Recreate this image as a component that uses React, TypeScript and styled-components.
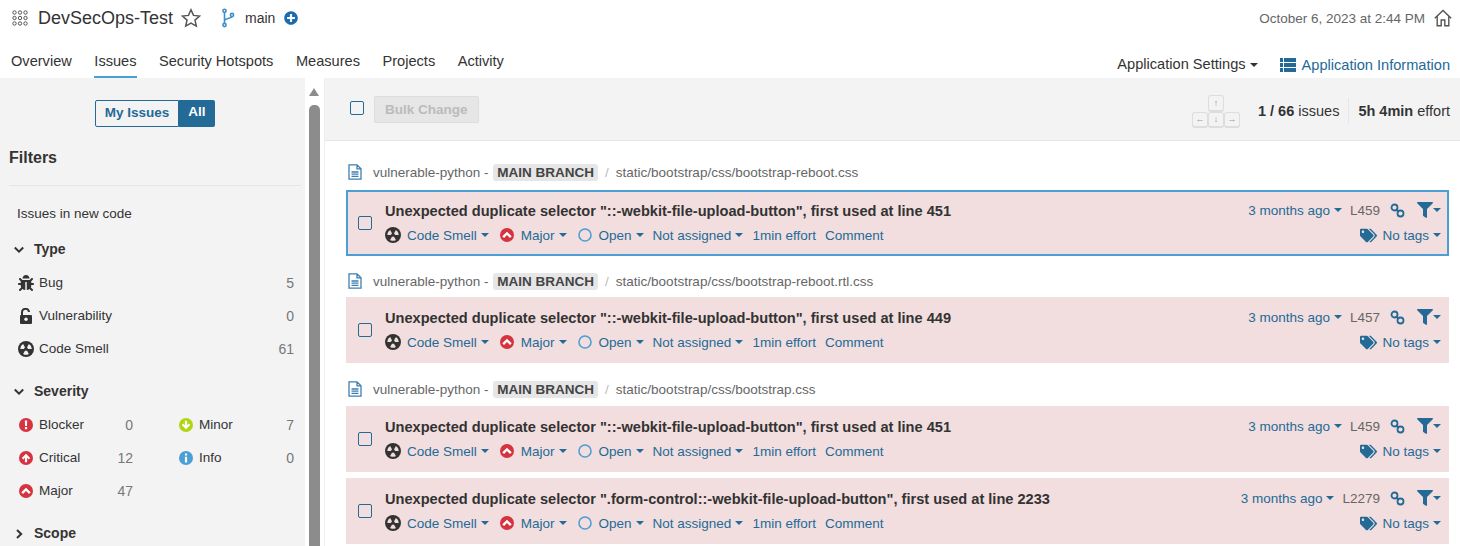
import React from "react";
import styled, { createGlobalStyle } from "styled-components";
import { FaBug, FaFilter, FaTags, FaPlusCircle } from "react-icons/fa";

const GlobalStyle = createGlobalStyle`
  * { box-sizing: border-box; }
  html, body { margin: 0; padding: 0; height: 100%; overflow: hidden; background: #fff; }
  body { font-family: "Liberation Sans", Arial, sans-serif; font-size: 13.5px; color: #333; }
`;

// ---- icons ----
const GridIcon = () => (
  <svg width="16" height="16" viewBox="0 0 16 16" fill="none" stroke="#555" strokeWidth="1">
    {[2.5, 8, 13.5].map((y) => [2.5, 8, 13.5].map((x) => <circle key={`${x}-${y}`} cx={x} cy={y} r="1.7" />))}
  </svg>
);

const StarIcon = () => (
  <svg width="20" height="20" viewBox="0 0 20 20" fill="none" stroke="#555" strokeWidth="1.5">
    <path d="M10 1.8l2.5 5.6 6.1.6-4.6 4.1 1.3 6-5.3-3.1-5.3 3.1 1.3-6L1.4 8l6.1-.6z" />
  </svg>
);

const BranchIcon = () => (
  <svg width="14" height="20" viewBox="0 0 14 20" fill="none" stroke="#3f8fc9" strokeWidth="1.6">
    <circle cx="3.5" cy="2.8" r="1.6" />
    <circle cx="3.5" cy="17" r="1.6" />
    <circle cx="11" cy="7" r="1.6" />
    <path d="M3.500 4.500v10.800M3.500 13c0-3 7-2.500 7.500-4.400" />
  </svg>
);

const HomeIcon = () => (
  <svg width="18" height="18" viewBox="0 0 18 18" fill="none" stroke="#555" strokeWidth="1.4">
    <path d="M.8 9.200L9 1.400l8.200 7.800M3.200 7.400v9.400h4V11h3.600v5.800h4V7.400" />
  </svg>
);

const ListIcon = () => (
  <svg width="16" height="14" viewBox="0 0 16 14" fill="#236a97">
    {[0, 5, 10].map((y) => (
      <g key={y}>
        <rect x="0" y={y} width="3" height="4" />
        <rect x="4" y={y} width="12" height="4" />
      </g>
    ))}
  </svg>
);

const wedge = (deg: number) => {
  const pt = (r: number, a: number) => {
    const rad = (a * Math.PI) / 180;
    return `${(8 + r * Math.cos(rad)).toFixed(2)} ${(8 + r * Math.sin(rad)).toFixed(2)}`;
  };
  return `M${pt(2.1, deg - 30)}L${pt(5.8, deg - 30)}A5.8 5.800 0 0 1 ${pt(5.8, deg + 30)}L${pt(2.1, deg + 30)}Z`;
};

const SmellIcon = ({ light = "#f3f3f3" }: { light?: string }) => (
  <svg width="16" height="16" viewBox="0 0 16 16">
    <circle cx="8" cy="8" r="8" fill="#333" />
    {[-150, -30, 90].map((a) => <path key={a} d={wedge(a)} fill={light} />)}
  </svg>
);

const LockIcon = () => (
  <svg width="14" height="16" viewBox="0 0 14 16">
    <path d="M3 7V4.500a3.500 3.500 0 0 1 7-.5" fill="none" stroke="#333" strokeWidth="2" />
    <rect x="1" y="7" width="12" height="9" rx="1" fill="#333" />
    <circle cx="7" cy="11.300" r="1.700" fill="#f3f3f3" />
  </svg>
);

const SeverityIcon = ({ kind }: { kind: string }) => {
  const fill = kind === "minor" ? "#b0d513" : kind === "info" ? "#4b9fd5" : "#d4333f";
  return (
    <svg width="14" height="14" viewBox="0 0 14 14">
      <circle cx="7" cy="7" r="7" fill={fill} />
      {kind === "blocker" && <path d="M5.800 2.500h2.400l-.3 5.500H6.100zM5.900 9h2.200v2.300H5.900z" fill="#fff" />}
      {kind === "critical" && <path d="M7 2.700L11.200 7 9.700 8.400 8.100 6.800V11.300H5.900V6.800L4.300 8.400 2.800 7z" fill="#fff" />}
      {kind === "major" && <path d="M7 3.700L11.700 8.300 10 10 7 7.100 4 10 2.300 8.300z" fill="#fff" />}
      {kind === "minor" && <path d="M7 11.300L2.800 7l1.500-1.400 1.600 1.600V2.700h2.200v4.500l1.600-1.600L11.200 7z" fill="#fff" />}
      {kind === "info" && <path d="M5.900 2.400h2.200v2.100H5.900zM5.900 5.800h2.200v5.800H5.900z" fill="#fff" />}
    </svg>
  );
};

const OpenIcon = () => (
  <svg width="14" height="14" viewBox="0 0 14 14" fill="none" stroke="#4b9fd5" strokeWidth="1.6">
    <circle cx="7" cy="7" r="6" />
  </svg>
);

const FileIcon = () => (
  <svg width="14" height="16" viewBox="0 0 14 16" fill="none" stroke="#3f7fb0" strokeWidth="1.300">
    <path d="M1 .8h8l4 4v10.400H1zM9 .8v4h4M3.500 8h7M3.500 10.200h7M3.500 12.400h7" />
  </svg>
);

const LinkIcon = () => (
  <svg width="15" height="15" viewBox="0 0 15 15" fill="none" stroke="#236a97" strokeWidth="1.800">
    <circle cx="4.500" cy="4.500" r="3" />
    <circle cx="10.500" cy="10.500" r="3" />
    <path d="M6.500 6.500l2 2" />
  </svg>
);

const Caret = styled.span<{ $dark?: boolean; $flush?: boolean }>`
  display: inline-block;
  flex: none;
  width: 0;
  height: 0;
  margin-left: ${(p) => (p.$flush ? "0" : "4px")};
  border-left: 4px solid transparent;
  border-right: 4px solid transparent;
  border-top: 4px solid ${(p) => (p.$dark ? "#333" : "#236a97")};
  vertical-align: 2px;
`;

const Chevron = ({ open = true }: { open?: boolean }) => (
  <svg width="10" height="10" viewBox="0 0 10 10" fill="none" stroke="#333" strokeWidth="2">
    <path d={open ? "M.8 2.500l4.200 4.200 4.200-4.200" : "M3 1l4.200 4-4.200 4"} />
  </svg>
);

// ---- header ----
const Header = styled.header`
  height: 78px;
  background: #fff;
  display: flex;
  flex-direction: column;
`;

const TopRow = styled.div`
  display: flex;
  align-items: center;
  height: 36px;
  padding: 0 8px 0 12px;
`;

const Title = styled.span`
  font-size: 18px;
  margin-left: 10px;
`;

const StarWrap = styled.span`
  display: flex;
  margin-left: 8px;
`;

const BranchWrap = styled.span`
  display: flex;
  margin-left: 20px;
`;

const BranchName = styled.span`
  margin-left: 10px;
  font-size: 14px;
`;

const PlusWrap = styled.span`
  display: flex;
  margin-left: 9px;
  color: #1a6cae;
  font-size: 14px;
`;

const Spacer = styled.div`
  flex: 1;
`;

const DateText = styled.span`
  color: #666;
  margin-right: 9px;
`;

const NavRow = styled.div`
  display: flex;
  align-items: flex-end;
  height: 42px;
  padding: 0 10px 0 11px;
  font-size: 14.6px;
`;

const Tab = styled.span<{ $active?: boolean }>`
  margin-right: 22.500px;
  padding-bottom: 6px;
  height: 27px;
  line-height: 21px;
  border-bottom: 2px solid ${(p) => (p.$active ? "#4b9fd5" : "transparent")};
`;

const SettingsMenu = styled.span`
  margin-right: 22px;
  padding-bottom: 6px;
`;

const InfoLink = styled.span`
  display: flex;
  align-items: center;
  gap: 6px;
  color: #236a97;
  padding-bottom: 5px;
`;

// ---- page body ----
const Body = styled.div`
  display: flex;
  height: 468px;
  overflow: hidden;
`;

const Sidebar = styled.aside`
  width: 305px;
  flex: none;
  background: #f3f3f3;
  padding: 22px 4px 0 9px;
`;

const ToggleRow = styled.div`
  display: flex;
  justify-content: center;
  font-weight: bold;
`;

const ToggleLeft = styled.span`
  height: 27px;
  line-height: 24px;
  width: 84px;
  text-align: center;
  border: 1px solid #236a97;
  border-radius: 2px 0 0 2px;
  color: #236a97;
`;

const ToggleRight = styled.span`
  height: 27px;
  line-height: 24px;
  width: 36px;
  text-align: center;
  border-radius: 0 2px 2px 0;
  background: #236a97;
  color: #fff;
`;

const FiltersTitle = styled.h2`
  font-size: 16px;
  font-weight: bold;
  line-height: 20px;
  margin: 21px 0 0;
  padding-bottom: 17px;
  border-bottom: 1px solid #e6e6e6;
`;

const NewCode = styled.div`
  margin: 19px 0 8px 8px;
  line-height: 18px;
`;

const FacetTitle = styled.div`
  display: flex;
  align-items: center;
  font-weight: bold;
  font-size: 14px;
  line-height: 18px;
  margin: 17px 0 0 5px;
`;

const ChevronWrap = styled.span`
  display: flex;
  width: 20px;
  margin-top: 2px;
`;

const FacetList = styled.div`
  margin: 8px 7px 0 9px;
`;

const FacetItem = styled.div`
  display: flex;
  align-items: center;
  height: 33px;
`;

const FacetIcon = styled.span`
  display: flex;
  justify-content: center;
  width: 16px;
  margin-right: 5px;
`;

const FacetName = styled.span`
  flex: 1;
`;

const FacetCount = styled.span`
  color: #777;
  font-size: 14px;
`;

const FacetGrid = styled.div`
  display: grid;
  grid-template-columns: 115px 116px;
  column-gap: 45px;
  margin: 8px 0 0 9px;
`;

const ScrollColumn = styled.div`
  width: 20px;
  flex: none;
  background: #fff;
  padding: 10px 5px 0 4px;
  display: flex;
  flex-direction: column;
  align-items: center;
  border-right: 1px solid #eee;
`;

const ScrollArrow = styled.span`
  width: 0;
  height: 0;
  border-left: 5.500px solid transparent;
  border-right: 5.500px solid transparent;
  border-bottom: 8px solid #8c8c8c;
`;

const ScrollThumb = styled.div`
  width: 11px;
  flex: 1;
  margin-top: 9px;
  background: #8c8c8c;
  border-radius: 5px 5px 0 0;
`;

const Main = styled.main`
  flex: 1;
  min-width: 0;
`;

const Toolbar = styled.div`
  height: 63px;
  background: #f3f3f3;
  border-bottom: 1px solid #e6e6e6;
  display: flex;
  align-items: center;
  padding: 4px 10px 0 25px;
`;

const Check = styled.span<{ $toolbar?: boolean }>`
  display: inline-block;
  width: 14px;
  height: 14px;
  flex: none;
  margin-bottom: ${(p) => (p.$toolbar ? "7px" : "0")};
  border: 1px solid #236a97;
  border-radius: 2px;
`;

const BulkButton = styled.span`
  margin: 0 0 3px 10px;
  height: 27px;
  line-height: 25px;
  padding: 0 10px;
  border: 1px solid #ddd;
  border-radius: 2px;
  background: #e6e6e6;
  color: #bbb;
  font-weight: bold;
`;

const Keys = styled.div`
  display: grid;
  grid-template-columns: repeat(3, 16px);
  grid-template-rows: 17px 16px;
  margin-right: 18px;
`;

const Key = styled.span<{ $col: number }>`
  grid-column: ${(p) => p.$col};
  display: flex;
  align-items: center;
  justify-content: center;
  border: 1px solid #ddd;
  border-bottom-width: 2px;
  border-radius: 3px;
  background: #f3f3f3;
  color: #999;
  font-size: 9px;
`;

const ToolText = styled.span`
  font-size: 14.5px;
`;

const Sep = styled.span`
  width: 1px;
  height: 26px;
  background: #e6e6e6;
  margin: 0 9px;
`;

const IssueList = styled.div`
  padding: 21px 11px 0 21px;
`;

const FileHead = styled.div<{ $top: number; $bottom: number }>`
  display: flex;
  align-items: center;
  height: 20px;
  margin: ${(p) => `${p.$top}px 0 ${p.$bottom}px`};
  padding-left: 2px;
  color: #666;
`;

const FileIconWrap = styled.span`
  display: flex;
  margin-right: 11px;
`;

const Badge = styled.span`
  margin: 0 6px 0 1px;
  padding: 0 4px;
  border-radius: 3px;
  background: #e6e6e6;
  color: #444;
  font-weight: bold;
  line-height: 17px;
`;

const Slash = styled.span`
  margin: 0 7px 0 1px;
  color: #bbb;
`;

const Row = styled.div<{ $selected?: boolean; $tight?: boolean }>`
  height: 66px;
  margin-top: ${(p) => (p.$tight ? "6px" : "0")};
  background: #f2dede;
  border: 2px solid ${(p) => (p.$selected ? "#4b9fd5" : "#f2dede")};
  display: flex;
  align-items: center;
  padding: 0 6px 0 10px;
`;

const RowMain = styled.div`
  flex: 1;
  margin-left: 13px;
`;

const RowTitle = styled.div`
  font-weight: bold;
  font-size: 14.6px;
  line-height: 18px;
`;

const Meta = styled.div`
  display: flex;
  align-items: center;
  height: 18px;
  margin-top: 6px;
  color: #236a97;
`;

const MetaItem = styled.span`
  display: flex;
  align-items: center;
  margin-right: 9px;
`;

const MetaIcon = styled.span<{ $lead?: boolean }>`
  display: flex;
  margin: ${(p) => (p.$lead ? "0 7px 0 2px" : "0 6px 0 0")};
`;

const RowSide = styled.div`
  display: flex;
  flex-direction: column;
  align-items: flex-end;
  gap: 7px;
  margin-top: -1px;
`;

const SideLine = styled.div`
  display: flex;
  align-items: center;
  height: 18px;
  color: #236a97;
`;

const LineNo = styled.span`
  color: #666;
  margin: 0 10px 0 8px;
`;

const LinkWrap = styled.span`
  display: flex;
  margin-right: 12px;
`;

const FilterWrap = styled.span`
  display: flex;
  align-items: center;
  color: #236a97;
  font-size: 16px;
`;

const TagWrap = styled.span`
  display: flex;
  margin-right: 5px;
  font-size: 17px;
`;

const issues = [
  { file: "static/bootstrap/css/bootstrap-reboot.css", top: 0, bottom: 8, msg: "Unexpected duplicate selector \"::-webkit-file-upload-button\", first used at line 451", line: "L459", selected: true },
  { file: "static/bootstrap/css/bootstrap-reboot.rtl.css", top: 15, bottom: 6, msg: "Unexpected duplicate selector \"::-webkit-file-upload-button\", first used at line 449", line: "L457" },
  { file: "static/bootstrap/css/bootstrap.css", top: 16, bottom: 7, msg: "Unexpected duplicate selector \"::-webkit-file-upload-button\", first used at line 451", line: "L459" },
  { msg: "Unexpected duplicate selector \".form-control::-webkit-file-upload-button\", first used at line 2233", line: "L2279" },
];

const severities = [
  { kind: "blocker", label: "Blocker", count: 0 },
  { kind: "minor", label: "Minor", count: 7 },
  { kind: "critical", label: "Critical", count: 12 },
  { kind: "info", label: "Info", count: 0 },
  { kind: "major", label: "Major", count: 47 },
];

const IssueRow = ({ issue }: { issue: (typeof issues)[number] }) => (
  <>
    {issue.file && (
      <FileHead $top={issue.top ?? 0} $bottom={issue.bottom ?? 0}>
        <FileIconWrap><FileIcon /></FileIconWrap>
        vulnerable-python -&nbsp;<Badge>MAIN BRANCH</Badge><Slash>/</Slash>{issue.file}
      </FileHead>
    )}
    <Row $selected={issue.selected} $tight={!issue.file}>
      <Check />
      <RowMain>
        <RowTitle>{issue.msg}</RowTitle>
        <Meta>
          <MetaItem><MetaIcon><SmellIcon light="#f2dede" /></MetaIcon>Code Smell<Caret /></MetaItem>
          <MetaItem><MetaIcon $lead><SeverityIcon kind="major" /></MetaIcon>Major<Caret /></MetaItem>
          <MetaItem><MetaIcon $lead><OpenIcon /></MetaIcon>Open<Caret /></MetaItem>
          <MetaItem>Not assigned<Caret /></MetaItem>
          <MetaItem>1min effort</MetaItem>
          <MetaItem>Comment</MetaItem>
        </Meta>
      </RowMain>
      <RowSide>
        <SideLine>
          3 months ago<Caret />
          <LineNo>{issue.line}</LineNo>
          <LinkWrap><LinkIcon /></LinkWrap>
          <FilterWrap><FaFilter /><Caret $flush /></FilterWrap>
        </SideLine>
        <SideLine>
          <TagWrap><FaTags /></TagWrap>No tags<Caret />
        </SideLine>
      </RowSide>
    </Row>
  </>
);

export default function App() {
  return (
    <>
      <GlobalStyle />
      <Header>
        <TopRow>
          <GridIcon />
          <Title>DevSecOps-Test</Title>
          <StarWrap><StarIcon /></StarWrap>
          <BranchWrap><BranchIcon /></BranchWrap>
          <BranchName>main</BranchName>
          <PlusWrap><FaPlusCircle /></PlusWrap>
          <Spacer />
          <DateText>October 6, 2023 at 2:44 PM</DateText>
          <HomeIcon />
        </TopRow>
        <NavRow>
          <Tab>Overview</Tab>
          <Tab $active>Issues</Tab>
          <Tab>Security Hotspots</Tab>
          <Tab>Measures</Tab>
          <Tab>Projects</Tab>
          <Tab>Activity</Tab>
          <Spacer />
          <SettingsMenu>Application Settings<Caret $dark /></SettingsMenu>
          <InfoLink><ListIcon />Application Information</InfoLink>
        </NavRow>
      </Header>
      <Body>
        <Sidebar>
          <ToggleRow>
            <ToggleLeft>My Issues</ToggleLeft>
            <ToggleRight>All</ToggleRight>
          </ToggleRow>
          <FiltersTitle>Filters</FiltersTitle>
          <NewCode>Issues in new code</NewCode>
          <FacetTitle><ChevronWrap><Chevron /></ChevronWrap>Type</FacetTitle>
          <FacetList>
            <FacetItem><FacetIcon><FaBug size={16} /></FacetIcon><FacetName>Bug</FacetName><FacetCount>5</FacetCount></FacetItem>
            <FacetItem><FacetIcon><LockIcon /></FacetIcon><FacetName>Vulnerability</FacetName><FacetCount>0</FacetCount></FacetItem>
            <FacetItem><FacetIcon><SmellIcon /></FacetIcon><FacetName>Code Smell</FacetName><FacetCount>61</FacetCount></FacetItem>
          </FacetList>
          <FacetTitle><ChevronWrap><Chevron /></ChevronWrap>Severity</FacetTitle>
          <FacetGrid>
            {severities.map((s) => (
              <FacetItem key={s.kind}>
                <FacetIcon><SeverityIcon kind={s.kind} /></FacetIcon>
                <FacetName>{s.label}</FacetName>
                <FacetCount>{s.count}</FacetCount>
              </FacetItem>
            ))}
          </FacetGrid>
          <FacetTitle><ChevronWrap><Chevron open={false} /></ChevronWrap>Scope</FacetTitle>
        </Sidebar>
        <ScrollColumn>
          <ScrollArrow />
          <ScrollThumb />
        </ScrollColumn>
        <Main>
          <Toolbar>
            <Check $toolbar />
            <BulkButton>Bulk Change</BulkButton>
            <Spacer />
            <Keys>
              <Key $col={2}>↑</Key>
              <Key $col={1}>←</Key>
              <Key $col={2}>↓</Key>
              <Key $col={3}>→</Key>
            </Keys>
            <ToolText><b>1 / 66</b> issues</ToolText>
            <Sep />
            <ToolText><b>5h 4min</b> effort</ToolText>
          </Toolbar>
          <IssueList>
            {issues.map((issue, i) => <IssueRow key={i} issue={issue} />)}
          </IssueList>
        </Main>
      </Body>
    </>
  );
}
